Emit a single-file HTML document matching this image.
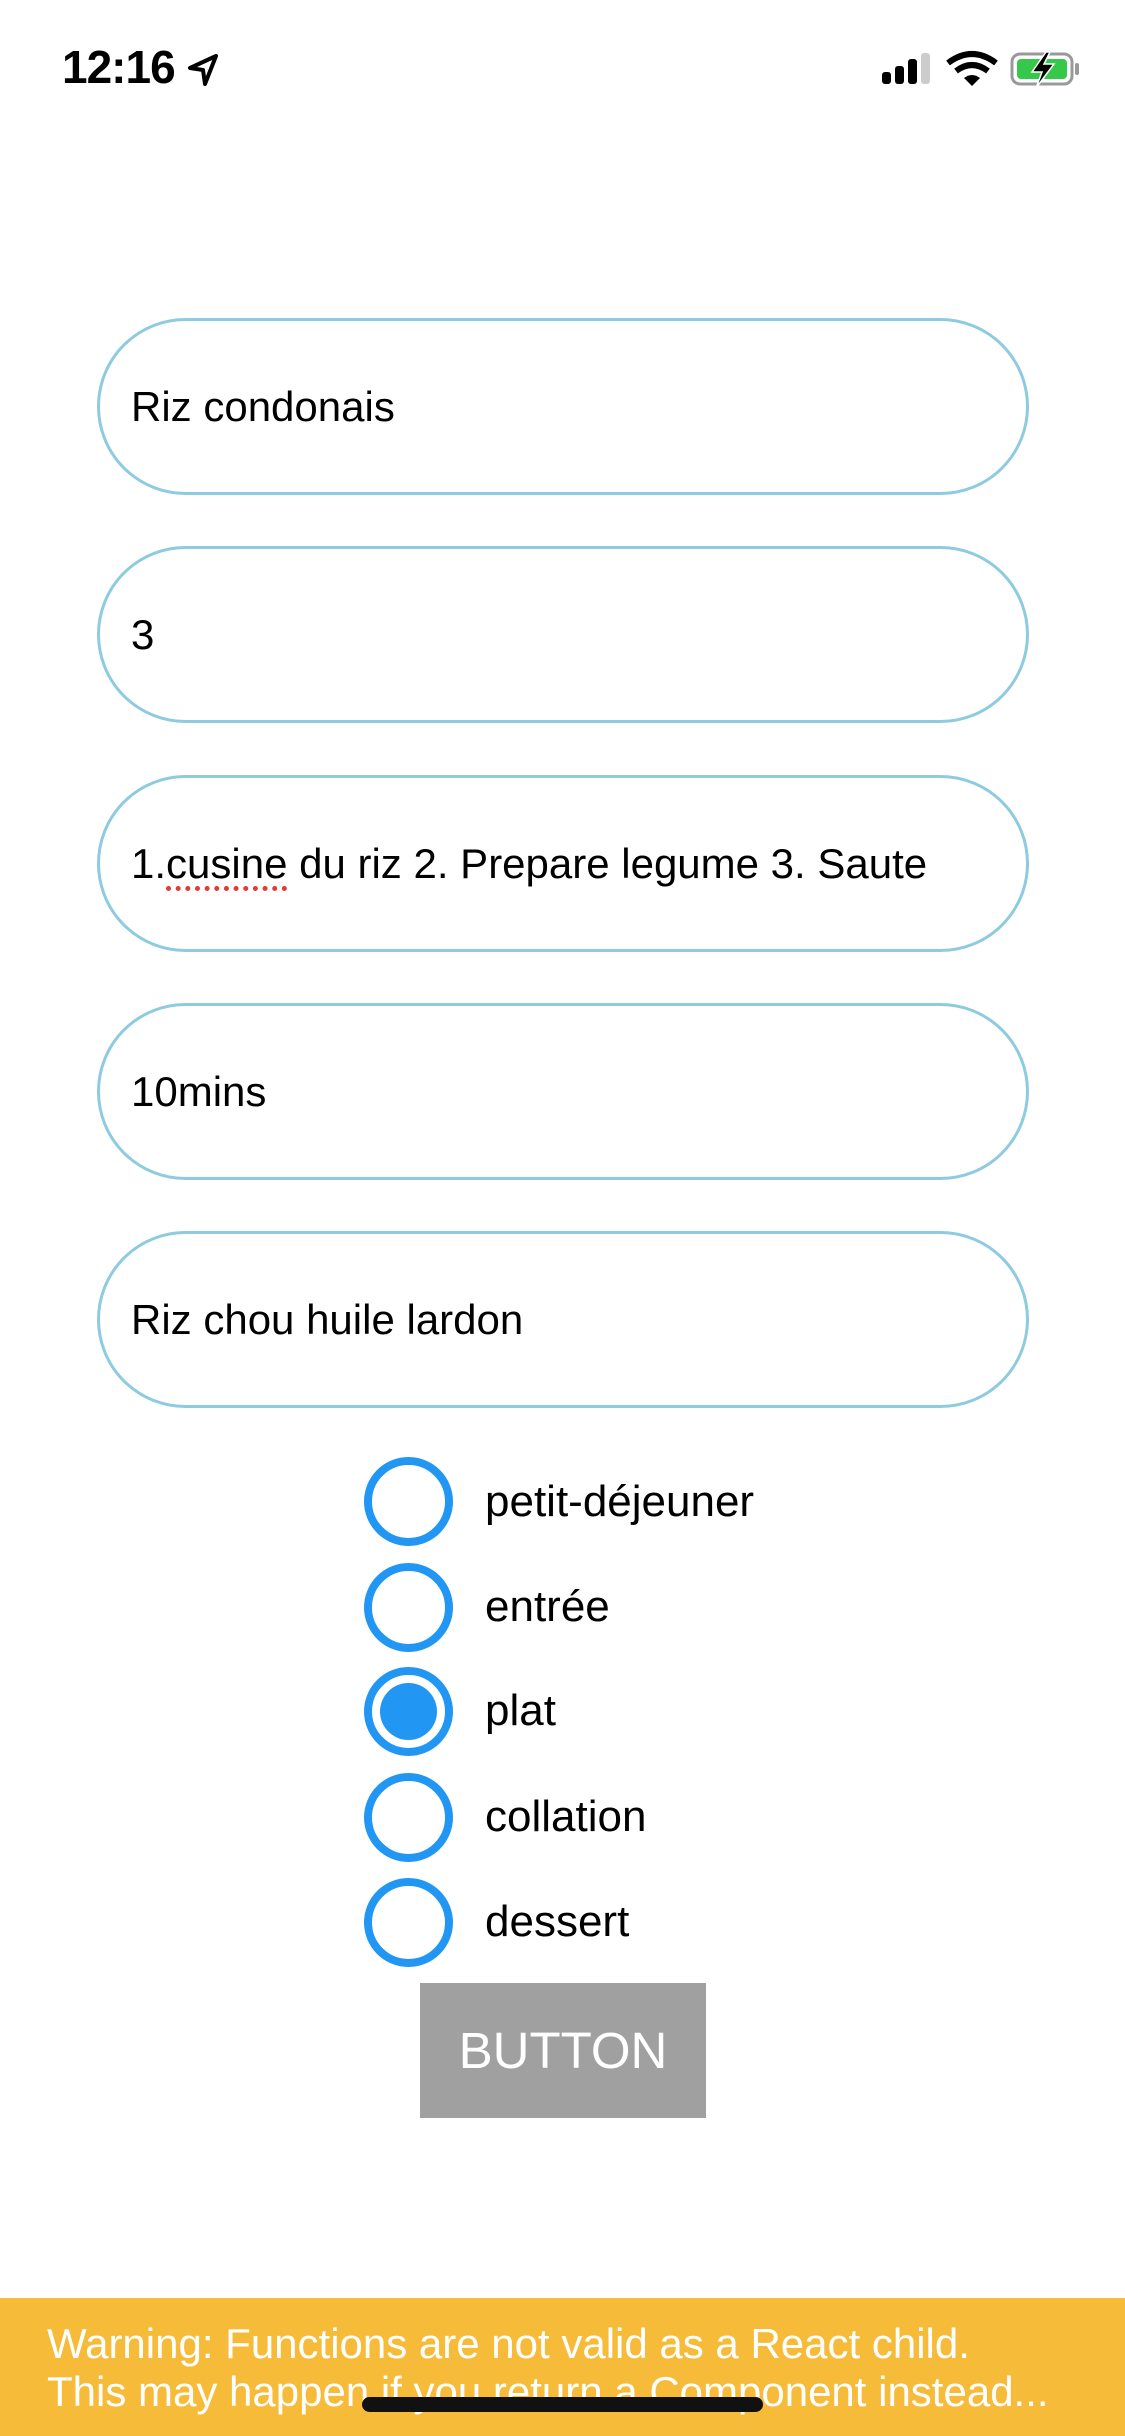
<!DOCTYPE html>
<html><head><meta charset="utf-8"><style>
*{margin:0;padding:0;box-sizing:border-box}
body{width:1125px;height:2436px;background:#fff;position:relative;overflow:hidden;font-family:"Liberation Sans",sans-serif}
.f{position:absolute;left:97px;width:932px;height:177px;border:3px solid #8ecbe0;border-radius:90px}
.f span{position:absolute;left:31px;top:0;line-height:171px;font-size:42px;color:#000}
.r{position:absolute;left:364px;width:89px;height:89px;border:8px solid #2196f3;border-radius:50%}
.r.on::after{content:"";position:absolute;left:8px;top:8px;width:57px;height:57px;border-radius:50%;background:#2196f3}
.l{position:absolute;left:485px;font-size:44px;color:#000;line-height:50px}
</style></head><body>
<div style="position:absolute;left:62px;top:40px;font-size:46px;font-weight:bold;letter-spacing:-1px">12:16</div>
<svg style="position:absolute;left:186px;top:53px" width="34" height="34" viewBox="0 0 34 34"><path d="M30 3 L4 15 L17 17 L19 31 Z" fill="none" stroke="#000" stroke-width="4" stroke-linejoin="round"/></svg>
<svg style="position:absolute;left:880px;top:50px" width="205" height="40" viewBox="0 0 205 40">
<rect x="2" y="22" width="9" height="12" rx="3" fill="#000"/>
<rect x="15" y="16" width="9" height="18" rx="3" fill="#000"/>
<rect x="28" y="9" width="9" height="25" rx="3" fill="#000"/>
<rect x="41" y="3" width="9" height="31" rx="3" fill="#ccc"/>
<path d="M68 13 Q92 -5 116 13" fill="none" stroke="#000" stroke-width="6"/>
<path d="M76 21 Q92 9 108 21" fill="none" stroke="#000" stroke-width="6"/>
<path d="M84 28 L92 36 L100 28 Q92 22 84 28Z" fill="#000"/>
<rect x="132" y="4" width="60" height="30" rx="8" fill="none" stroke="#999" stroke-width="3"/>
<rect x="137" y="9" width="50" height="20" rx="4" fill="#35c84b"/>
<rect x="195" y="13" width="4" height="12" rx="2" fill="#999"/>
<path d="M166 2 L152 22 L162 22 L156 38 L174 14 L164 14 L170 2Z" fill="#000" stroke="#fff" stroke-width="1.5"/>
</svg>
<div class="f" style="top:318px"><span>Riz condonais</span></div>
<div class="f" style="top:546px"><span>3</span></div>
<div class="f" style="top:775px"><span>1.<span style="position:static;line-height:inherit;text-decoration:underline dotted #e53935;text-decoration-thickness:5px;text-underline-offset:8px">cusine</span> du riz 2. Prepare legume 3. Saute</span></div>
<div class="f" style="top:1003px"><span>10mins</span></div>
<div class="f" style="top:1231px"><span>Riz chou huile lardon</span></div>
<div class="r" style="top:1457px"></div><div class="l" style="top:1477px">petit-déjeuner</div>
<div class="r" style="top:1563px"></div><div class="l" style="top:1582px">entrée</div>
<div class="r on" style="top:1667px"></div><div class="l" style="top:1686px">plat</div>
<div class="r" style="top:1773px"></div><div class="l" style="top:1792px">collation</div>
<div class="r" style="top:1878px"></div><div class="l" style="top:1897px">dessert</div>
<div style="position:absolute;left:420px;top:1983px;width:286px;height:135px;background:#a0a0a0;color:#fff;font-size:51px;text-align:center;line-height:135px">BUTTON</div>
<div style="position:absolute;left:0;top:2298px;width:1125px;height:138px;background:#f7bb3a;color:#fff;font-size:42px;padding:22px 0 0 47px;line-height:48px;white-space:nowrap">Warning: Functions are not valid as a React child.<br>This may happen if you return a Component instead...</div>
<div style="position:absolute;left:362px;top:2397px;width:401px;height:15px;border-radius:8px;background:#111"></div>
</body></html>
